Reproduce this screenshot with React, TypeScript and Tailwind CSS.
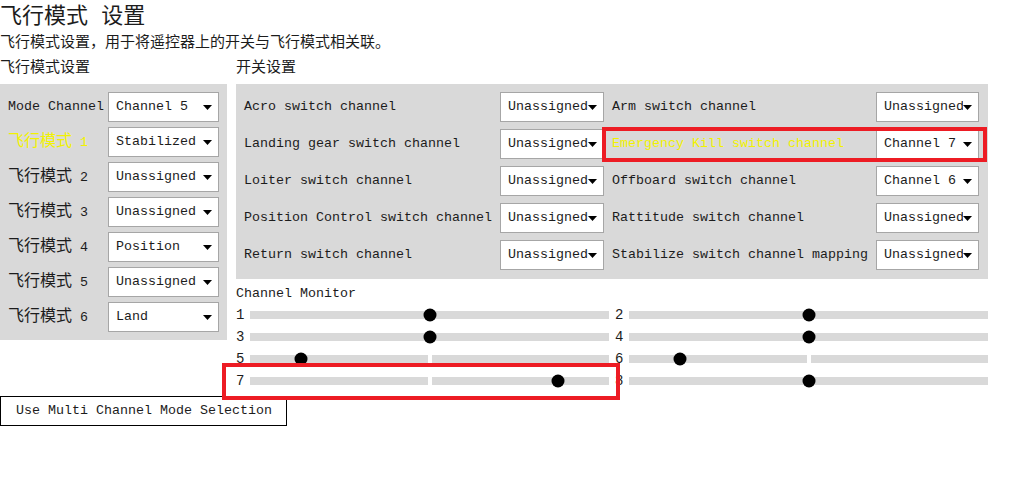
import React from "react";

const FONT = "font-['Liberation_Mono','Noto_Sans_CJK_SC',monospace]";

const modeRows = [
  { label: "Mode Channel", value: "Channel 5", zh: false, hi: false },
  { label: "1", value: "Stabilized", zh: true, hi: true },
  { label: "2", value: "Unassigned", zh: true, hi: false },
  { label: "3", value: "Unassigned", zh: true, hi: false },
  { label: "4", value: "Position", zh: true, hi: false },
  { label: "5", value: "Unassigned", zh: true, hi: false },
  { label: "6", value: "Land", zh: true, hi: false },
];

const switchRows = [
  ["Acro switch channel", "Unassigned", "Arm switch channel", "Unassigned"],
  ["Landing gear switch channel", "Unassigned", "Emergency Kill switch channel", "Channel 7"],
  ["Loiter switch channel", "Unassigned", "Offboard switch channel", "Channel 6"],
  ["Position Control switch channel", "Unassigned", "Rattitude switch channel", "Unassigned"],
  ["Return switch channel", "Unassigned", "Stabilize switch channel mapping", "Unassigned"],
];

// thumb position in percent
const monitor = [
  { n: 1, pos: 50 },
  { n: 2, pos: 50 },
  { n: 3, pos: 50 },
  { n: 4, pos: 50 },
  { n: 5, pos: 14.2 },
  { n: 6, pos: 14.2 },
  { n: 7, pos: 85.8 },
  { n: 8, pos: 50 },
];

function Caret() {
  return (
    <svg width="9" height="5" viewBox="0 0 9 5" className="shrink-0">
      <path d="M0 0 L9 0 L4.5 5 Z" fill="#000" />
    </svg>
  );
}

function Select({ value, width }: { value: string; width: string }) {
  return (
    <div
      className={`flex h-[30px] ${width} shrink-0 items-center border border-[#a6a6a6] bg-white pl-[7px] pr-[6px]`}
    >
      <span className="min-w-0 flex-1 overflow-hidden whitespace-nowrap text-[#1c1c1c]">{value}</span>
      <Caret />
    </div>
  );
}

function MonitorRow({ n, pos }: { n: number; pos: number }) {
  return (
    <div className="flex h-[22px] items-center">
      <span className="w-[14px] shrink-0 text-[14px] leading-none text-[#1c1c1c]">{n}</span>
      <div className="relative flex h-[8px] flex-1 gap-[4px]">
        <div className="flex-1 bg-[#d9d9d9]" />
        <div className="flex-1 bg-[#d9d9d9]" />
        <div
          className="absolute top-1/2 h-[13px] w-[13px] -translate-x-1/2 -translate-y-1/2 rounded-full bg-black"
          style={{ left: `${pos}%` }}
        />
      </div>
    </div>
  );
}

export default function App() {
  return (
    <div className={`relative h-[492px] w-[1026px] overflow-hidden bg-white text-[13.33px] text-[#1c1c1c] ${FONT}`}>
      <h1 className="h-[35px] text-[22px] leading-[35px] font-normal">飞行模式 设置</h1>
      <p className="h-[18px] text-[15px] leading-[18px]">飞行模式设置，用于将遥控器上的开关与飞行模式相关联。</p>

      <div className="mt-[7px] flex gap-[9px]">
        {/* Flight modes column */}
        <div className="w-[227px] shrink-0">
          <div className="h-[18px] text-[15px] leading-[18px]">飞行模式设置</div>
          <div className="mt-[6px] flex flex-col gap-[5px] bg-[#d9d9d9] py-[8px] pl-[8px] pr-[8px]">
            {modeRows.map((r) => (
              <div key={r.label} className="flex h-[30px] items-center">
                <div className={`w-[100px] shrink-0 whitespace-nowrap ${r.hi ? "text-[#f2f200]" : ""}`}>
                  {r.zh ? (
                    <>
                      <span className="text-[16px]">飞行模式</span> {r.label}
                    </>
                  ) : (
                    r.label
                  )}
                </div>
                <Select value={r.value} width="w-[111px]" />
              </div>
            ))}
          </div>
        </div>

        {/* Switches + monitor column */}
        <div className="w-[752px] shrink-0">
          <div className="h-[18px] text-[15px] leading-[18px]">开关设置</div>
          <div className="mt-[6px] flex flex-col gap-[7px] bg-[#d9d9d9] pb-[9px] pl-[8px] pr-[9px] pt-[8px]">
            {switchRows.map((r) => (
              <div key={r[0]} className="flex h-[30px] items-center">
                <div className="w-[256px] shrink-0 whitespace-nowrap">{r[0]}</div>
                <Select value={r[1]} width="w-[104px]" />
                <div
                  className={`ml-[8px] w-[264px] shrink-0 whitespace-nowrap ${
                    r[2].startsWith("Emergency") ? "text-[#f2f200]" : ""
                  }`}
                >
                  {r[2]}
                </div>
                <Select value={r[3]} width="w-[103px]" />
              </div>
            ))}
          </div>

          <div className="mt-[5px] flex h-[20px] items-center">Channel Monitor</div>
          <div className="grid grid-cols-2 gap-x-[6px]">
            {monitor.map((m) => (
              <MonitorRow key={m.n} n={m.n} pos={m.pos} />
            ))}
          </div>
        </div>
      </div>

      <button className="mt-[4px] flex h-[30px] w-[287px] items-center border border-black bg-white pl-[15px] text-left text-[#1c1c1c]">
        Use Multi Channel Mode Selection
      </button>

      {/* annotation boxes */}
      <div className="pointer-events-none absolute left-[602px] top-[127px] h-[35px] w-[385px] border-[4px] border-[#ed1c24]" />
      <div className="pointer-events-none absolute left-[222px] top-[363px] h-[37px] w-[398px] border-[4px] border-[#ed1c24]" />
    </div>
  );
}
